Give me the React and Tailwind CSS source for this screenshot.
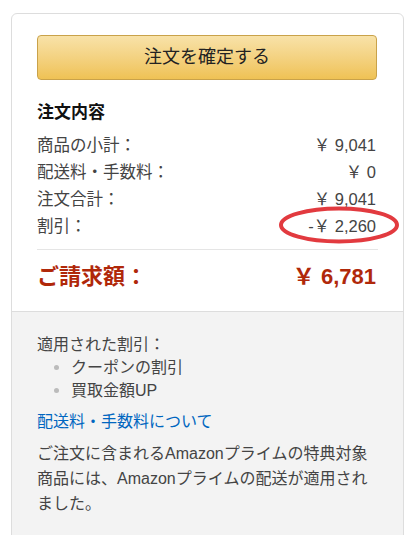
export default function App() {
  const rows = [
    { label: '商品の小計：', value: '￥ 9,041' },
    { label: '配送料・手数料：', value: '￥ 0' },
    { label: '注文合計：', value: '￥ 9,041' },
    { label: '割引：', value: '-￥ 2,260', circled: true },
  ];

  return (
    <div
      className="w-[410px] h-[535px] bg-white pt-[13px] pl-[11px] overflow-hidden text-[#333]"
      style={{ fontFamily: '"Liberation Sans", "Noto Sans CJK JP", sans-serif' }}
    >
      <div className="w-[393px] h-[540px] border border-[#ddd] rounded-[6px] overflow-hidden flex flex-col">
        <div className="px-[25px] pt-[21px] pb-[19px]">
          <button className="w-[340px] h-[45px] rounded-[4px] border border-[#c9a24a] bg-gradient-to-b from-[#f8e2a8] to-[#efc254] text-[18px] text-[#222]">
            注文を確定する
          </button>

          <div className="mt-[22px] text-[17px] font-bold text-[#111] leading-[22px]">注文内容</div>

          <div className="mt-[8px]">
            {rows.map((r) => (
              <div key={r.label} className="relative flex justify-between h-[27px] items-center text-[16.5px] text-[#444]">
                <span>{r.label}</span>
                <span className="pr-[2px]">{r.value}</span>
                {r.circled && (
                  <svg
                    className="absolute right-[-22px] top-[-8px]"
                    width="122"
                    height="40"
                    viewBox="0 0 122 40"
                  >
                    <ellipse cx="61" cy="20" rx="58" ry="16.5" fill="none" stroke="#e23a3f" strokeWidth="4" />
                  </svg>
                )}
              </div>
            ))}
          </div>

          <div className="mt-[9px] border-t border-[#e5e5e5]" />

          <div className="mt-[12px] flex justify-between items-center text-[22px] font-bold text-[#b0280a] leading-[30px]">
            <span>ご請求額：</span>
            <span className="pr-[2px]">￥ 6,781</span>
          </div>
        </div>

        <div className="flex-1 bg-[#f3f3f3] border-t border-[#ddd] px-[25px] pt-[21px] text-[16px] text-[#444] leading-[23px]">
          <div>適用された割引：</div>
          <ul className="pl-[17px]">
            <li className="flex items-center gap-[12px]">
              <span className="w-[5px] h-[5px] rounded-full bg-[#bbb]" />
              <span>クーポンの割引</span>
            </li>
            <li className="flex items-center gap-[12px]">
              <span className="w-[5px] h-[5px] rounded-full bg-[#bbb]" />
              <span>買取金額UP</span>
            </li>
          </ul>
          <div className="mt-[8px] text-[#0066c0]">配送料・手数料について</div>
          <p className="mt-[8px] leading-[25px]">
            ご注文に含まれるAmazonプライムの特典対象商品には、Amazonプライムの配送が適用されました。
          </p>
        </div>
      </div>
    </div>
  );
}
